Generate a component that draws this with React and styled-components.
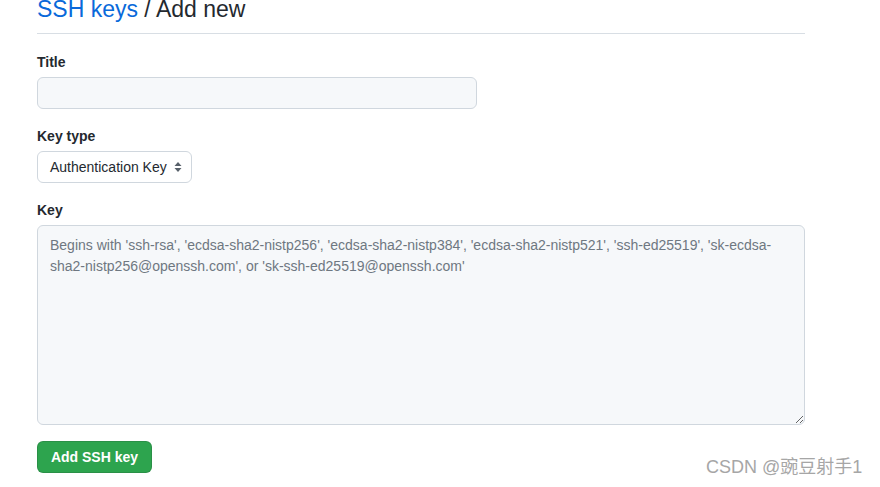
import styled, { createGlobalStyle } from 'styled-components';
import React from 'react';

const GlobalStyle = createGlobalStyle`
  body {
    margin: 0;
    background: #fff;
    font-family: "Liberation Sans", "Noto Sans", sans-serif;
    color: #24292f;
    overflow: hidden;
  }
`;

const Page = styled.div`
  position: relative;
  width: 880px;
  height: 487px;
  padding-left: 37px;
  box-sizing: border-box;
`;

const Content = styled.div`
  width: 768px;
`;

const Heading = styled.h2`
  margin: -9px 0 0;
  padding-bottom: 6px;
  font-size: 23px;
  font-weight: 400;
  line-height: 36px;
  border-bottom: 1px solid #d8dee4;
`;

const Crumb = styled.a`
  color: #0969da;
  text-decoration: none;
`;

const Form = styled.form`
  display: flex;
  flex-direction: column;
  padding-top: 18px;
`;

const Group = styled.div`
  display: flex;
  flex-direction: column;
  align-items: flex-start;
  margin-bottom: 17px;
`;

const Label = styled.label`
  font-size: 14px;
  font-weight: 700;
  line-height: 21px;
  margin-bottom: 4px;
`;

const TextInput = styled.input`
  width: 440px;
  height: 32px;
  box-sizing: border-box;
  background: #f6f8fa;
  border: 1px solid #d0d7de;
  border-radius: 6px;
  padding: 5px 12px;
  font: inherit;
  font-size: 14px;
`;

const Select = styled.div`
  display: flex;
  align-items: center;
  justify-content: space-between;
  width: 155px;
  height: 32px;
  box-sizing: border-box;
  padding: 0 9px 0 12px;
  border: 1px solid #d0d7de;
  border-radius: 6px;
  font-size: 14px;
  color: #24292f;
`;

const TextArea = styled.textarea`
  width: 768px;
  height: 200px;
  box-sizing: border-box;
  background: #f6f8fa;
  border: 1px solid #d0d7de;
  border-radius: 6px;
  padding: 9px 12px 8px;
  font: inherit;
  font-size: 14px;
  line-height: 21px;
  resize: vertical;
  &::placeholder {
    color: #6e7781;
  }
`;

const Button = styled.button`
  width: 115px;
  height: 32px;
  margin-top: -1px;
  background: #2da44e;
  color: #fff;
  border: 1px solid rgba(27, 31, 36, 0.15);
  border-radius: 6px;
  font: inherit;
  font-size: 14px;
  font-weight: 700;
  cursor: pointer;
`;

const Watermark = styled.div`
  position: absolute;
  left: 706px;
  top: 465px;
  font-family: "Liberation Sans", "Noto Sans CJK SC", sans-serif;
  font-size: 18px;
  line-height: 22px;
  color: #a6a6a6;
  white-space: nowrap;
`;

export default function App() {
  return (
    <Page>
      <GlobalStyle />
      <Content>
        <Heading>
          <Crumb href="#">SSH keys</Crumb> / Add new
        </Heading>
        <Form>
          <Group>
            <Label>Title</Label>
            <TextInput type="text" />
          </Group>
          <Group>
            <Label>Key type</Label>
            <Select>
              <span>Authentication Key</span>
              <svg width="8" height="12" viewBox="0 0 8 12">
                <path d="M4 1 L7.5 5 H0.5 Z M4 11 L0.5 7 H7.5 Z" fill="#57606a" />
              </svg>
            </Select>
          </Group>
          <Group>
            <Label>Key</Label>
            <TextArea placeholder="Begins with 'ssh-rsa', 'ecdsa-sha2-nistp256', 'ecdsa-sha2-nistp384', 'ecdsa-sha2-nistp521', 'ssh-ed25519', 'sk-ecdsa-sha2-nistp256@openssh.com', or 'sk-ssh-ed25519@openssh.com'" />
          </Group>
          <div>
            <Button type="button">Add SSH key</Button>
          </div>
        </Form>
      </Content>
      <Watermark>CSDN @豌豆射手1</Watermark>
    </Page>
  );
}
